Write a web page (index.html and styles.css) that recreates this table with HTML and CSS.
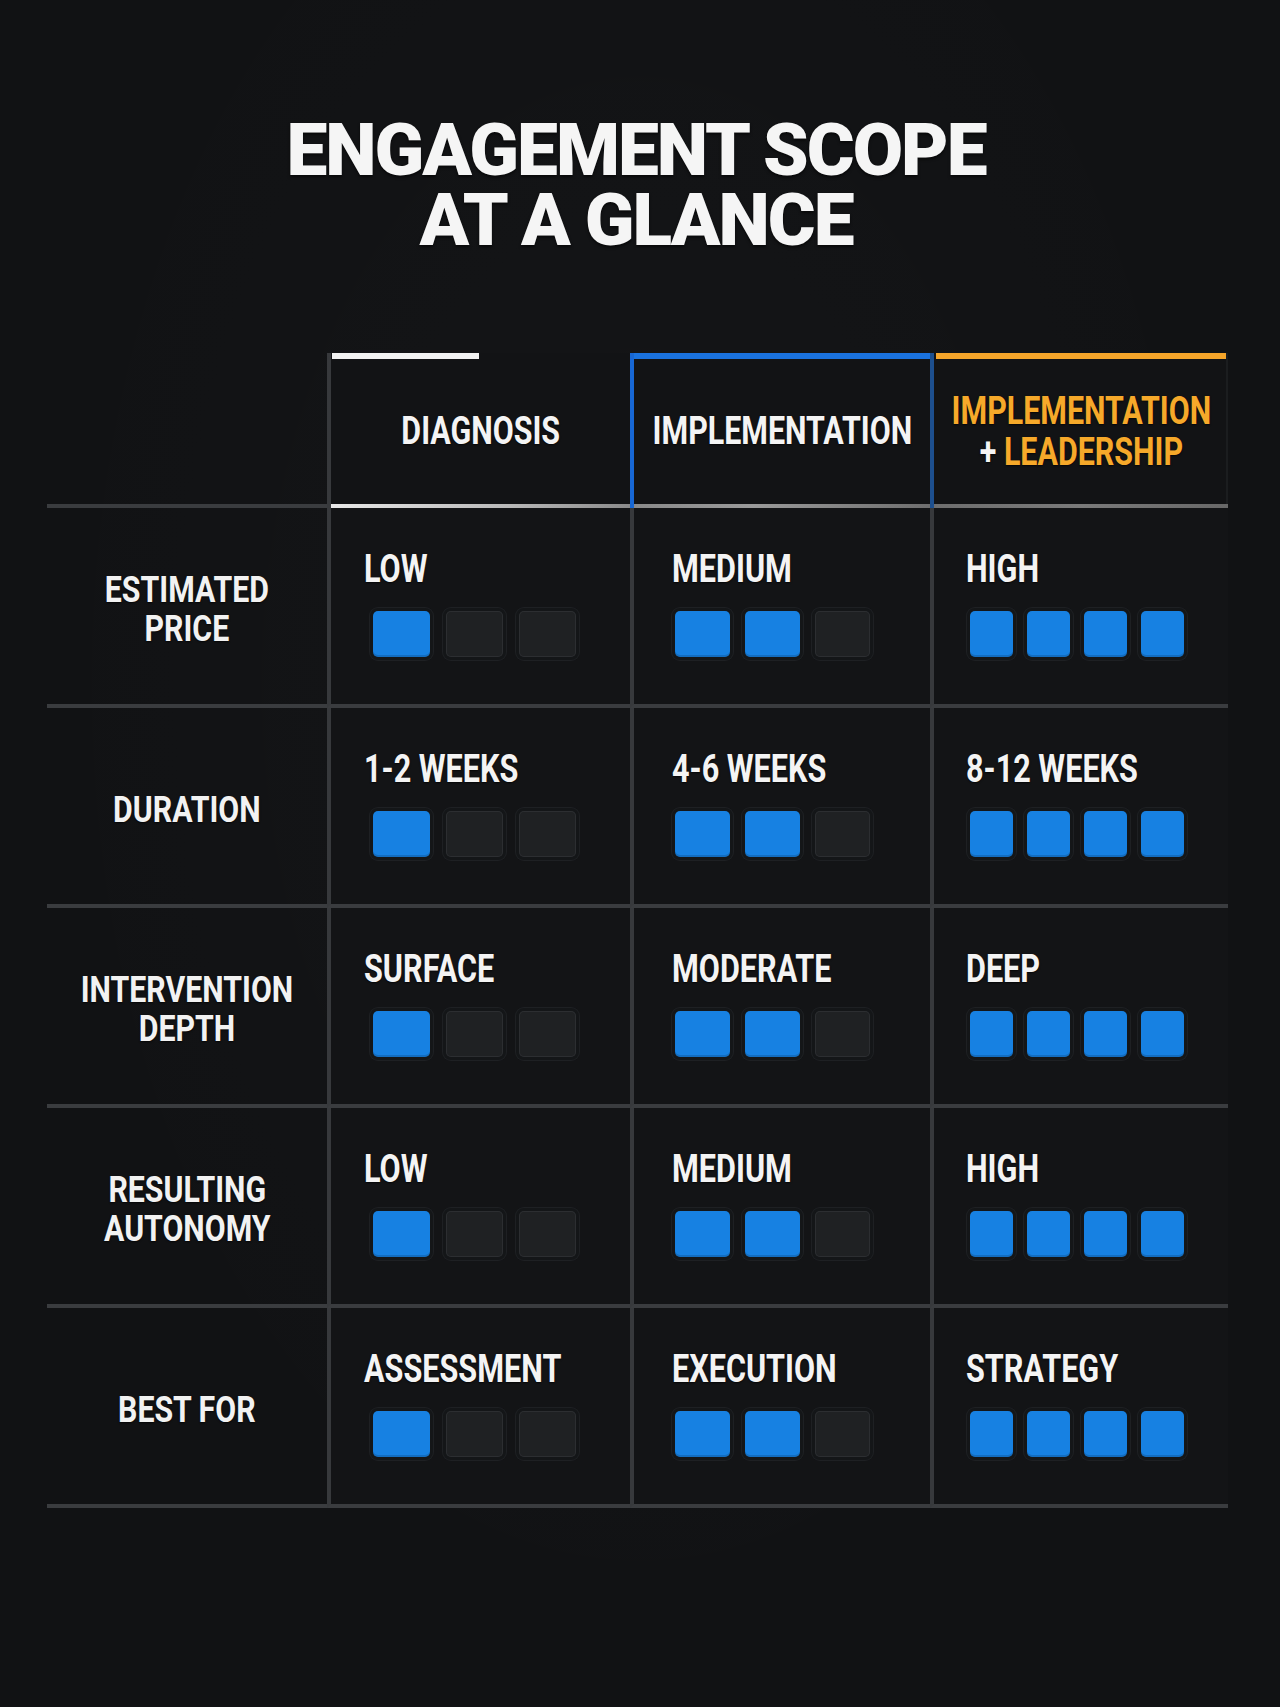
FILE: index.html
```html
<!DOCTYPE html>
<html lang="en">
<head>
<meta charset="utf-8">
<title>Engagement Scope at a Glance</title>
<link rel="stylesheet" href="styles.css">
</head>
<body>
<div class="page">
  <h1 class="title"><span class="tl">ENGAGEMENT SCOPE</span><span class="tl">AT A GLANCE</span></h1>

  <div class="grid">
    <div class="hcell hlabel"></div>
    <div class="hcell hdiag"><span class="ht">DIAGNOSIS</span></div>
    <div class="hcell himpl"><span class="ht">IMPLEMENTATION</span></div>
    <div class="hcell hlead"><span class="ht orange">IMPLEMENTATION<br><span class="plus">+</span> LEADERSHIP</span></div>

    <div class="label"><span class="lt">ESTIMATED<br>PRICE</span></div>
    <div class="val c1"><span class="vt">LOW</span><div class="meter"><span class="slot on"><i></i></span><span class="slot"><i></i></span><span class="slot"><i></i></span></div></div>
    <div class="val c2"><span class="vt">MEDIUM</span><div class="meter"><span class="slot on"><i></i></span><span class="slot on"><i></i></span><span class="slot"><i></i></span></div></div>
    <div class="val c3"><span class="vt">HIGH</span><div class="meter"><span class="slot on"><i></i></span><span class="slot on"><i></i></span><span class="slot on"><i></i></span><span class="slot on"><i></i></span></div></div>

    <div class="label"><span class="lt">DURATION</span></div>
    <div class="val c1"><span class="vt">1-2 WEEKS</span><div class="meter"><span class="slot on"><i></i></span><span class="slot"><i></i></span><span class="slot"><i></i></span></div></div>
    <div class="val c2"><span class="vt">4-6 WEEKS</span><div class="meter"><span class="slot on"><i></i></span><span class="slot on"><i></i></span><span class="slot"><i></i></span></div></div>
    <div class="val c3"><span class="vt">8-12 WEEKS</span><div class="meter"><span class="slot on"><i></i></span><span class="slot on"><i></i></span><span class="slot on"><i></i></span><span class="slot on"><i></i></span></div></div>

    <div class="label"><span class="lt">INTERVENTION<br>DEPTH</span></div>
    <div class="val c1"><span class="vt">SURFACE</span><div class="meter"><span class="slot on"><i></i></span><span class="slot"><i></i></span><span class="slot"><i></i></span></div></div>
    <div class="val c2"><span class="vt">MODERATE</span><div class="meter"><span class="slot on"><i></i></span><span class="slot on"><i></i></span><span class="slot"><i></i></span></div></div>
    <div class="val c3"><span class="vt">DEEP</span><div class="meter"><span class="slot on"><i></i></span><span class="slot on"><i></i></span><span class="slot on"><i></i></span><span class="slot on"><i></i></span></div></div>

    <div class="label"><span class="lt">RESULTING<br>AUTONOMY</span></div>
    <div class="val c1"><span class="vt">LOW</span><div class="meter"><span class="slot on"><i></i></span><span class="slot"><i></i></span><span class="slot"><i></i></span></div></div>
    <div class="val c2"><span class="vt">MEDIUM</span><div class="meter"><span class="slot on"><i></i></span><span class="slot on"><i></i></span><span class="slot"><i></i></span></div></div>
    <div class="val c3"><span class="vt">HIGH</span><div class="meter"><span class="slot on"><i></i></span><span class="slot on"><i></i></span><span class="slot on"><i></i></span><span class="slot on"><i></i></span></div></div>

    <div class="label"><span class="lt">BEST FOR</span></div>
    <div class="val c1"><span class="vt">ASSESSMENT</span><div class="meter"><span class="slot on"><i></i></span><span class="slot"><i></i></span><span class="slot"><i></i></span></div></div>
    <div class="val c2"><span class="vt">EXECUTION</span><div class="meter"><span class="slot on"><i></i></span><span class="slot on"><i></i></span><span class="slot"><i></i></span></div></div>
    <div class="val c3"><span class="vt">STRATEGY</span><div class="meter"><span class="slot on"><i></i></span><span class="slot on"><i></i></span><span class="slot on"><i></i></span><span class="slot on"><i></i></span></div></div>
  </div>
</div>
</body>
</html>
```

FILE: styles.css
```css
html, body {
  margin: 0;
  padding: 0;
  background: #111214;
}

body {
  font-family: Roboto, "Liberation Sans", sans-serif;
  color: #f3f3f3;
}

.page {
  min-height: 1707px;
  box-sizing: border-box;
  padding-top: 115px;
  background:
    radial-gradient(ellipse at 50% 40%, rgba(255,255,255,0.015), rgba(0,0,0,0) 70%),
    #111214;
}

.title {
  margin: 0 8px 0 0;
  text-align: center;
  font-size: 73px;
  line-height: 70px;
  font-weight: 900;
  letter-spacing: -2px;
  color: #f5f5f5;
  text-shadow: 0 2px 3px rgba(0,0,0,0.6);
}

.tl {
  display: block;
  height: 70px;
}

.grid {
  margin: 98px 0 0 47px;
  width: 1181px;
  display: grid;
  grid-template-columns: 280px 303px 300px 298px;
  grid-template-rows: 155px repeat(5, 200px);
}

.hcell,
.label,
.val {
  box-sizing: border-box;
}

/* ---------- header ---------- */
.hcell {
  display: flex;
  align-items: center;
  justify-content: center;
  padding-top: 6px;
  padding-bottom: 4px;
  text-align: center;
}

.hlabel {
  background: linear-gradient(#3a3c3f, #3a3c3f) left bottom / 100% 4px no-repeat;
}

.hdiag {
  border-left: 4px solid #37393c;
  background:
    linear-gradient(#f2f2f2, #f2f2f2) 1px 0 / 147px 6px no-repeat,
    linear-gradient(90deg, #e8e8e8, #b8b8b8 60%, #8a8a8a) left bottom / 100% 4px no-repeat,
    #121315;
}

.himpl {
  border-left: 4px solid #1767d4;
  background:
    linear-gradient(#1a72de, #1a72de) 0 0 / 100% 6px no-repeat,
    linear-gradient(90deg, #8a8a8a, #9a9a9a 40%, #6e6e6e) left bottom / 100% 4px no-repeat,
    #121315;
}

.hlead {
  border-left: 4px solid #1d4f8e;
  background:
    linear-gradient(#f5a52a, #f5a52a) 2px 0 / calc(100% - 4px) 6px no-repeat,
    linear-gradient(90deg, #6e6e6e, #7a7a7a 50%, #686868) left bottom / 100% 4px no-repeat,
    linear-gradient(#1b1d1f, #1b1d1f) right top / 2px 100% no-repeat,
    #121315;
}

.ht {
  display: inline-block;
  font-size: 39px;
  line-height: 41px;
  font-weight: 700;
  color: #f4f4f4;
  transform: scaleX(0.78);
  transform-origin: center;
  white-space: nowrap;
  text-shadow: 0 1px 2px rgba(0,0,0,0.7);
}

.orange {
  color: #f6a92a;
}

.plus {
  color: #f4f4f4;
}

/* ---------- body ---------- */
.label {
  display: flex;
  align-items: center;
  justify-content: center;
  text-align: center;
  padding-top: 6px;
  border-bottom: 4px solid #3a3c3f;
}

.lt {
  display: inline-block;
  font-size: 36.5px;
  line-height: 39px;
  font-weight: 700;
  color: #f2f2f2;
  transform: scaleX(0.83);
  transform-origin: center;
  white-space: nowrap;
  text-shadow: 0 1px 2px rgba(0,0,0,0.7);
}

.val {
  border-left: 4px solid #37393c;
  border-bottom: 4px solid #3a3c3f;
  padding-top: 42px;
  padding-left: var(--pl);
  background: #131416;
}

.c1 { --pl: 33px; --off: 5px;  --w: 57px; --gap: 8px; }
.c2 { --pl: 38px; --off: -1px; --w: 55px; --gap: 7px; }
.c3 { --pl: 32px; --off: 0px;  --w: 43px; --gap: 6px; }

.vt {
  display: block;
  font-size: 39px;
  line-height: 39px;
  font-weight: 700;
  color: #f4f4f4;
  transform: scaleX(0.785);
  transform-origin: left;
  white-space: nowrap;
  text-shadow: 0 1px 2px rgba(0,0,0,0.7);
}

.meter {
  display: flex;
  gap: var(--gap);
  margin-top: 18px;
  margin-left: var(--off);
}

.slot {
  display: block;
  padding: 4px;
  border-radius: 9px;
  background: #141618;
  box-shadow: inset 0 0 0 1px #1e2023;
}

.slot i {
  display: block;
  width: var(--w);
  height: 46px;
  border-radius: 5px;
  background: #1f2123;
  box-shadow: inset 0 0 0 1px #2c2e31;
}

.slot.on i {
  background: #1781e2;
  box-shadow: inset 0 -2px 0 rgba(0,0,0,0.15);
}
```
